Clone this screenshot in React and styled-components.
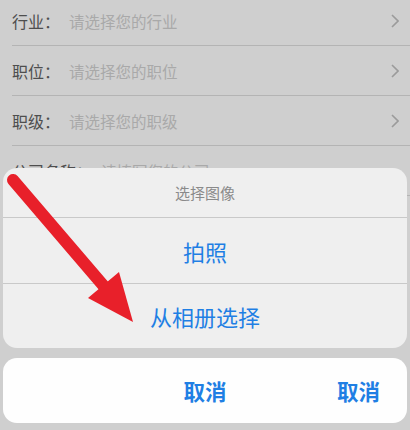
import React from "react";
import styled, { createGlobalStyle } from "styled-components";

const Global = createGlobalStyle`
  html, body { margin: 0; padding: 0; }
  body {
    font-family: "Noto Sans CJK SC", "Noto Sans", sans-serif;
    background: #cfcfcf;
  }
`;

const Screen = styled.div`
  position: relative;
  width: 410px;
  height: 430px;
  overflow: hidden;
  background: #cfcfcf;
`;

const List = styled.div`
  margin-top: -4px;
  padding-left: 12px;
`;

const Row = styled.div`
  display: flex;
  align-items: center;
  height: 50px;
  box-sizing: border-box;
  border-bottom: 1px solid #b4b4b4;
  padding-right: 11px;
`;

const Label = styled.span`
  font-size: 16px;
  color: #4e4e4e;
  margin-right: 9px;
  white-space: nowrap;
`;

const Placeholder = styled.span`
  flex: 1;
  font-size: 15.5px;
  color: #a9a9a9;
  white-space: nowrap;
`;

const Chevron = styled.svg`
  width: 8px;
  height: 14px;
  flex: none;
`;

const Overlay = styled.div`
  position: absolute;
  inset: 0;
  display: flex;
  flex-direction: column;
  justify-content: flex-end;
  gap: 10px;
  padding: 0 3px 7px;
`;

const Group = styled.div`
  background: #efefef;
  border-radius: 14px;
  overflow: hidden;
  display: flex;
  flex-direction: column;
`;

const Title = styled.div`
  height: 50px;
  display: flex;
  align-items: center;
  justify-content: center;
  font-size: 15px;
  color: #8a8a8a;
  border-bottom: 1px solid #c9c9c9;
  box-sizing: border-box;
`;

const Option = styled.div`
  height: ${(p) => p.$h}px;
  display: flex;
  align-items: center;
  justify-content: center;
  font-size: 22px;
  color: #1f7fe4;
  box-sizing: border-box;
  border-bottom: ${(p) => (p.$divider ? "1px solid #c9c9c9" : "none")};
`;

const CancelBar = styled.div`
  height: 65px;
  background: #fefefe;
  border-radius: 14px;
  display: grid;
  grid-template-columns: 1fr auto 1fr;
  align-items: center;
  padding-right: 27px;
  padding-left: 27px;
`;

const CancelText = styled.span`
  grid-column: ${(p) => p.$col};
  justify-self: ${(p) => (p.$col === 3 ? "end" : "center")};
  font-size: 21.5px;
  font-weight: 700;
  color: #1f7fe4;
`;

const Pointer = styled.svg`
  position: absolute;
  left: 0;
  top: 0;
  width: 410px;
  height: 430px;
  pointer-events: none;
`;

const rows = [
  ["行业：", "请选择您的行业"],
  ["职位：", "请选择您的职位"],
  ["职级：", "请选择您的职级"],
  ["公司名称：", "请填写您的公司"],
];

function Arrow() {
  return (
    <Chevron viewBox="0 0 8 14">
      <path d="M1 1 L7 7 L1 13" fill="none" stroke="#9b9b9b" strokeWidth="1.6" />
    </Chevron>
  );
}

export default function App() {
  return (
    <>
      <Global />
      <Screen>
        <List>
          {rows.map(([label, hint], i) => (
            <Row key={label}>
              <Label>{label}</Label>
              <Placeholder>{hint}</Placeholder>
              {i < 3 && <Arrow />}
            </Row>
          ))}
        </List>
        <Overlay>
          <Group>
            <Title>选择图像</Title>
            <Option $h={66} $divider>拍照</Option>
            <Option $h={64}>从相册选择</Option>
          </Group>
          <CancelBar>
            <CancelText $col={2}>取消</CancelText>
            <CancelText $col={3}>取消</CancelText>
          </CancelBar>
        </Overlay>
        <Pointer viewBox="0 0 410 430">
          <line
            x1="13"
            y1="180"
            x2="108"
            y2="291"
            stroke="#e8202a"
            strokeWidth="12"
            strokeLinecap="round"
          />
          <polygon points="88,298 119,272 133,322" fill="#e8202a" />
        </Pointer>
      </Screen>
    </>
  );
}
